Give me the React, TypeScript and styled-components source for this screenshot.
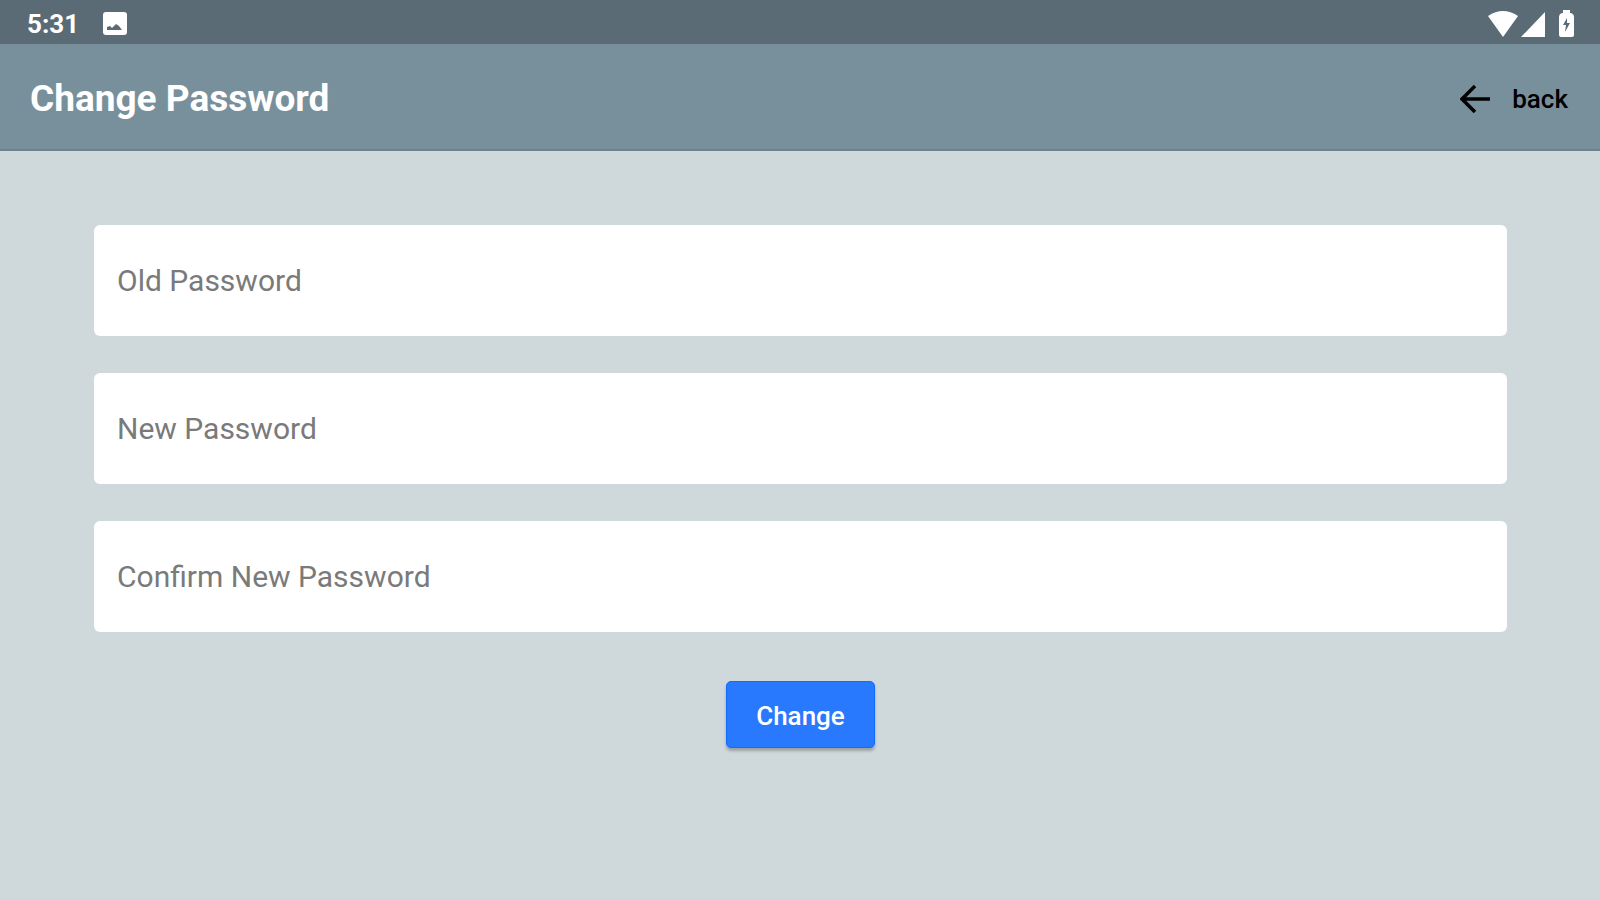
import React from "react";
import styled, { createGlobalStyle } from "styled-components";

const GlobalStyle = createGlobalStyle`
  * { box-sizing: border-box; }
  body {
    margin: 0;
    background: #cfd8db;
    font-family: Roboto, "Liberation Sans", sans-serif;
  }
`;

const Screen = styled.div`
  min-height: 100vh;
  display: flex;
  flex-direction: column;
  background: #cfd8db;
`;

const StatusBar = styled.div`
  display: flex;
  align-items: center;
  justify-content: space-between;
  height: 44px;
  padding: 3px 26px 0 27px;
  background: #5b6b75;
  color: #fff;
`;

const StatusGroup = styled.div`
  display: flex;
  align-items: center;
`;

const Clock = styled.span`
  margin-right: 24px;
  font-size: 26px;
  line-height: 32px;
  font-weight: 700;
`;

const Toolbar = styled.header`
  display: flex;
  align-items: center;
  justify-content: space-between;
  height: 107px;
  padding: 4px 32px 0 30px;
  background: #78909c;
  border-bottom: 2px solid #6c838f;
`;

const Title = styled.h1`
  margin: 0;
  color: #fff;
  font-size: 37px;
  line-height: 48px;
  font-weight: 700;
`;

const BackButton = styled.button`
  display: flex;
  align-items: center;
  gap: 22px;
  padding: 0;
  border: 0;
  background: none;
  color: #000;
  font-family: inherit;
  font-size: 26px;
  line-height: 32px;
  font-weight: 500;
  cursor: pointer;
`;

const Form = styled.form`
  display: flex;
  flex-direction: column;
  align-items: center;
  gap: 37px;
  padding: 74px 93px 40px 94px;
`;

const Field = styled.input`
  width: 100%;
  height: 111px;
  padding: 0 23px;
  border: 0;
  border-radius: 6px;
  background: #fff;
  color: #222;
  font-family: inherit;
  font-size: 30px;
  font-weight: 400;

  &::placeholder {
    color: #7a7a7a;
    opacity: 1;
  }
`;

const SubmitButton = styled.button`
  height: 67px;
  margin-top: 12px;
  padding: 2px 29px 0;
  border: 1px solid #126bff;
  border-radius: 5px;
  background: #2979ff;
  box-shadow: 0 3px 3px rgba(0, 0, 0, 0.25);
  color: #fff;
  font-family: inherit;
  font-size: 26px;
  line-height: 32px;
  font-weight: 500;
  cursor: pointer;
`;

const fields = [
  { name: "old", label: "Old Password", autoComplete: "current-password" },
  { name: "new", label: "New Password", autoComplete: "new-password" },
  { name: "confirm", label: "Confirm New Password", autoComplete: "new-password" },
];

const PictureIcon = () => (
  <svg width="24" height="23" viewBox="0 0 24 23" aria-hidden="true">
    <rect width="24" height="23" rx="3" fill="#fff" />
    <path d="M4 18v-3l3-1 2 2 4-4 3 2 3 4z" fill="#5b6b75" />
  </svg>
);

const SignalIcons = () => (
  <svg width="86" height="28" viewBox="0 0 86 28" aria-hidden="true">
    <path d="M0 6Q15-4 30 6L15 27z" fill="#fff" />
    <path d="M57 2v25H33z" fill="#fff" />
    <path
      d="M75 0h7v3h1q3 1 3 4v18q0 2-2 2H73q-2 0-2-2V7q0-3 3-4h1z"
      fill="#fff"
    />
    <path d="M79 8l-4 7h3l-1 7 5-9h-3z" fill="#5b6b75" />
  </svg>
);

const ArrowIcon = () => (
  <svg width="30" height="30" viewBox="0 0 30 30" aria-hidden="true">
    <path d="M15 2L2 15l13 13M2 15h28" fill="none" stroke="#000" strokeWidth="3.500" />
  </svg>
);

export default function App() {
  return (
    <Screen>
      <GlobalStyle />
      <StatusBar>
        <StatusGroup>
          <Clock>5:31</Clock>
          <PictureIcon />
        </StatusGroup>
        <StatusGroup>
          <SignalIcons />
        </StatusGroup>
      </StatusBar>
      <Toolbar>
        <Title>Change Password</Title>
        <BackButton type="button">
          <ArrowIcon />
          back
        </BackButton>
      </Toolbar>
      <Form onSubmit={(e: React.FormEvent) => e.preventDefault()}>
        {fields.map((f) => (
          <Field
            key={f.name}
            type="password"
            name={f.name}
            aria-label={f.label}
            placeholder={f.label}
            autoComplete={f.autoComplete}
          />
        ))}
        <SubmitButton type="submit">Change</SubmitButton>
      </Form>
    </Screen>
  );
}
